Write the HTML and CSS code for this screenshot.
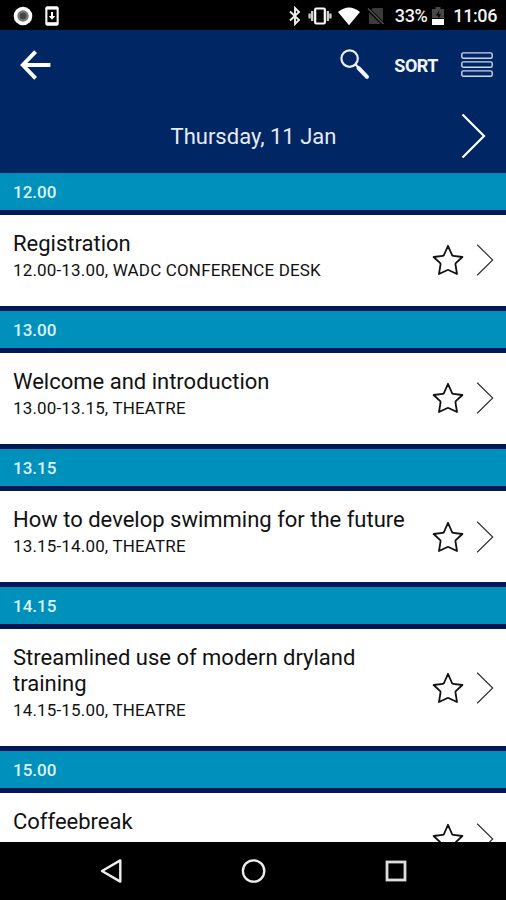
FILE: index.html
```
<!DOCTYPE html>
<html lang="en">
<head>
    <meta charset="UTF-8">
    <meta name="viewport" content="width=device-width, initial-scale=1.0">
    <title>Conference Programme</title>
    <link rel="stylesheet" href="styles.css">
</head>
<body>

<!-- Shared icons -->
<svg class="icon-defs" width="0" height="0">
    <symbol id="star" viewBox="0 0 32 32">
        <path d="M16 1.8 L20 11 Q20.4 11.8 21.3 11.9 L30.4 13 L23.8 19.2 Q23.3 19.8 23.5 20.6 L25 30 L17 26.2 Q16 25.7 15 26.2 L7 30 L8.5 20.6 Q8.7 19.8 8.2 19.2 L1.6 13 L10.7 11.9 Q11.6 11.8 12 11 Z" fill="none" stroke="#111" stroke-width="1.8" stroke-linejoin="round"/>
    </symbol>
    <symbol id="chevron" viewBox="0 0 18 32">
        <path d="M1.2 0.8 L16.7 16 L1.2 31.2" fill="none" stroke="#333" stroke-width="1.2"/>
    </symbol>
</svg>

<div class="screen">
    <!-- Status Bar -->
    <div class="status-bar">
        <div class="status-left">
            <svg width="20" height="20" viewBox="0 0 20 20"><circle cx="10" cy="10" r="9.3" fill="#fff"/><circle cx="10" cy="10" r="5.7" fill="#777"/><circle cx="10" cy="10" r="3.2" fill="#444"/></svg>
            <svg width="14" height="20" viewBox="0 0 14 20"><rect x="0.3" y="0.2" width="13.4" height="19.6" rx="2" fill="#fff"/><rect x="2.4" y="3.6" width="9.2" height="12.6" fill="#000"/><path d="M6 6h2v4h2.2L7 13.8 3.8 10H6z" fill="#fff"/></svg>
        </div>
        <div class="status-right">
            <svg class="bluetooth" width="14" height="20" viewBox="0 0 14 20"><path d="M2 5.5 L11 14 L7 18 V2 L11 6 L2 14.5" fill="none" stroke="#eee" stroke-width="1.9"/></svg>
            <svg class="vibrate" width="24" height="20" viewBox="0 0 24 20"><rect x="7.2" y="2.5" width="9.6" height="15" rx="1" fill="none" stroke="#fff" stroke-width="2.2"/><path d="M4.2 5v10M19.8 5v10M1.6 7.5v5M22.4 7.5v5" stroke="#ccc" stroke-width="2.4"/></svg>
            <svg class="wifi" width="24" height="20" viewBox="0 0 24 20"><path d="M1 6 Q12 -3 23 6 L12 19.2 Z" fill="#fff"/></svg>
            <svg class="no-sim" width="18" height="20" viewBox="0 0 18 20"><path d="M6 2H16V15.2L4.3 3.7zM2 6.5L13.8 18H2z" fill="#3c3c3c"/><path d="M1 2.5L16.5 18" stroke="#555" stroke-width="1.4"/></svg>
            <span class="battery-level">33%</span>
            <svg class="battery" width="12" height="20" viewBox="0 0 12 20"><path d="M3.5 1h5v2H12v9H0V3h3.5z" fill="#484848"/><path d="M7.5 4 3.8 9.5h2.5V13L9 8.3H6.5z" fill="#000"/><path d="M0 13h12v6H0z" fill="#fff"/></svg>
            <span class="clock">11:06</span>
        </div>
    </div>

    <!-- Header -->
    <header class="toolbar">
        <svg class="back-icon" width="32" height="32" viewBox="0 0 32 32"><path d="M15.6 2.6 L2.8 16 L15.6 29.4M3 16H30.4" fill="none" stroke="#fff" stroke-width="3.9"/></svg>
        <svg class="search-icon" width="30" height="31" viewBox="0 0 30 31"><circle cx="9.6" cy="9.6" r="8.2" fill="none" stroke="#eef" stroke-width="2.2"/><path d="M15.4 15.4L19 19" stroke="#eef" stroke-width="2.2"/><path d="M18.5 19L27 27.8" stroke="#f4f4ff" stroke-width="4" stroke-linecap="round"/></svg>
        <span class="sort-btn">SORT</span>
        <svg class="menu-icon" width="32" height="26" viewBox="0 0 32 26"><g fill="none" stroke="#d0d7ec" stroke-width="1.4"><rect x="0.8" y="0.9" width="30.4" height="5.4" rx="1.6"/><rect x="0.8" y="9.9" width="30.4" height="5.4" rx="1.6"/><rect x="0.8" y="18.9" width="30.4" height="5.4" rx="1.6"/></g></svg>
    </header>
    <div class="date-bar">
        <span class="date">Thursday, 11 Jan</span>
        <svg class="next-day" width="25" height="46" viewBox="0 0 25 46"><path d="M1.5 1.5 L23 23 L1.5 44.5" fill="none" stroke="#fff" stroke-width="2.2"/></svg>
    </div>

    <!-- Programme -->
    <main class="programme">
        <h2 class="time-slot">12.00</h2>
        <div class="session">
            <div class="session-info">
                <h3>Registration</h3>
                <p>12.00-13.00, WADC CONFERENCE DESK</p>
            </div>
            <svg class="star"><use href="#star"/></svg>
            <svg class="chevron"><use href="#chevron"/></svg>
        </div>

        <h2 class="time-slot">13.00</h2>
        <div class="session">
            <div class="session-info">
                <h3>Welcome and introduction</h3>
                <p>13.00-13.15, THEATRE</p>
            </div>
            <svg class="star"><use href="#star"/></svg>
            <svg class="chevron"><use href="#chevron"/></svg>
        </div>

        <h2 class="time-slot">13.15</h2>
        <div class="session">
            <div class="session-info">
                <h3>How to develop swimming for the future</h3>
                <p>13.15-14.00, THEATRE</p>
            </div>
            <svg class="star"><use href="#star"/></svg>
            <svg class="chevron"><use href="#chevron"/></svg>
        </div>

        <h2 class="time-slot">14.15</h2>
        <div class="session">
            <div class="session-info">
                <h3>Streamlined use of modern dryland training</h3>
                <p>14.15-15.00, THEATRE</p>
            </div>
            <svg class="star"><use href="#star"/></svg>
            <svg class="chevron"><use href="#chevron"/></svg>
        </div>

        <h2 class="time-slot">15.00</h2>
        <div class="session">
            <div class="session-info">
                <h3>Coffeebreak</h3>
            </div>
            <svg class="star"><use href="#star"/></svg>
            <svg class="chevron"><use href="#chevron"/></svg>
        </div>
    </main>

    <!-- Android Navigation -->
    <nav class="nav-bar">
        <svg width="24" height="26" viewBox="0 0 24 26"><path d="M21.3 2.4V23.6L3 13z" fill="none" stroke="#eee" stroke-width="2.4" stroke-linejoin="round"/></svg>
        <svg width="26" height="26" viewBox="0 0 26 26"><circle cx="12.6" cy="13" r="10.7" fill="none" stroke="#eee" stroke-width="2.3"/></svg>
        <svg width="22" height="22" viewBox="0 0 22 22"><rect x="2" y="2" width="18" height="18" fill="none" stroke="#ddd" stroke-width="2.8"/></svg>
    </nav>
</div>

</body>
</html>
```
FILE: styles.css
```
body {
    font-family: Roboto, "Liberation Sans", sans-serif;
    margin: 0;
    background-color: #000;
}

h2, h3, p {
    margin: 0;
}

svg {
    display: block;
    flex: none;
}

.icon-defs {
    position: absolute;
}

.screen {
    width: 506px;
    height: 900px;
    display: flex;
    flex-direction: column;
    overflow: hidden;
    background-color: #002663;
}

/* Status Bar */
.status-bar {
    height: 30px;
    flex: none;
    display: flex;
    justify-content: space-between;
    align-items: center;
    box-sizing: border-box;
    padding: 1px 9px 0 13px;
    background-color: #000;
    color: #f2f2f2;
    font-size: 18px;
    font-weight: 500;
}

.status-left, .status-right {
    display: flex;
    align-items: center;
}

.status-left {
    gap: 12px;
}

.vibrate {
    margin-left: 6px;
}

.wifi {
    margin-left: 5px;
}

.no-sim {
    margin-left: 6px;
}

.battery-level {
    margin-left: 10px;
    letter-spacing: -0.4px;
}

.battery {
    margin-left: 5px;
}

.clock {
    margin-left: 9px;
    letter-spacing: -0.4px;
}

/* Header */
.toolbar {
    height: 70px;
    flex: none;
    display: flex;
    align-items: center;
    box-sizing: border-box;
    padding: 0 13px 0 20px;
}

.search-icon {
    margin: -1px 0 0 auto;
}

.sort-btn {
    margin: 0 23px 0 24px;
    color: #f2f4ff;
    font-size: 18px;
    font-weight: 700;
    letter-spacing: -0.5px;
}

.date-bar {
    height: 72.8px;
    flex: none;
    display: grid;
    grid-template-columns: 1fr auto 1fr;
    align-items: center;
    box-sizing: border-box;
    padding: 0 20px;
}

.date {
    grid-column: 2;
    padding: 1px 0 0 1px;
    color: #e8eaf8;
    font-size: 22px;
}

.next-day {
    justify-self: end;
}

/* Programme */
.programme {
    flex: 1;
    min-height: 0;
    overflow: hidden;
}

.time-slot {
    height: 36.8px;
    line-height: 38px;
    padding-left: 13px;
    background-color: #0090bc;
    color: #dff4ff;
    font-size: 17px;
    font-weight: 500;
}

.session {
    display: flex;
    align-items: center;
    min-height: 101.4px;
    box-sizing: border-box;
    padding: 0 12px 0 13px;
    border: solid #001858;
    border-width: 5.3px 0;
    background-color: #fff;
    color: #111;
}

.session-info {
    flex: 1;
    align-self: flex-start;
    padding: 16px 0 24px;
}

.session h3 {
    font-size: 22px;
    font-weight: 400;
    line-height: 26px;
}

.session p {
    font-size: 17px;
    line-height: 26px;
    letter-spacing: 0.16px;
    margin-bottom: -1px;
}

.star {
    width: 32px;
    height: 32px;
}

.chevron {
    width: 18px;
    height: 32px;
    margin-left: 12px;
}

/* Android Navigation */
.nav-bar {
    height: 58px;
    flex: none;
    display: flex;
    justify-content: space-between;
    align-items: center;
    box-sizing: border-box;
    padding: 0 99px;
    background-color: #000;
}
```
